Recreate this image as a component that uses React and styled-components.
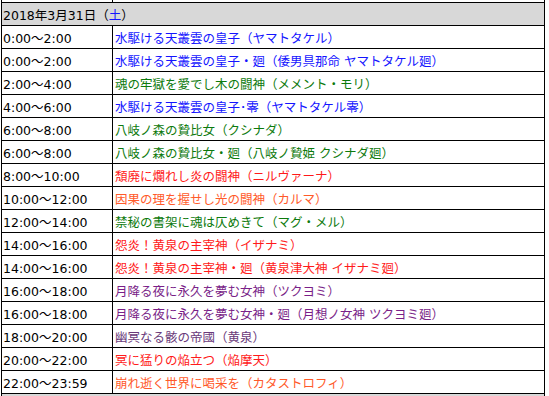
import React from 'react'
import styled, { createGlobalStyle } from "styled-components";

const GlobalStyle = createGlobalStyle`
    body{
        margin: 0;
        background: #fff;
        font-family: "DejaVu Sans", "Noto Sans CJK JP", sans-serif;
        font-size: 12.5px;
        color: #000;
    }
`;

const Page = styled.div`
    padding-left: 1px;
    height: 396px;
    overflow: hidden;
`;

const Table = styled.div`
    width: 544px;
    margin-top: -21px;
    border-left: 1px solid #000;
    border-right: 1px solid #000;
    box-sizing: border-box;
`;

const DayHeader = styled.div`
    height: 23px;
    box-sizing: border-box;
    border-top: 1px solid #000;
    background: #d8d8d8;
    display: flex;
    align-items: center;
    padding-left: 1px;
    white-space: nowrap;
`;

const Weekday = styled.span`
    color: ${props => props.color};
`;

const Row = styled.div`
    height: 23px;
    box-sizing: border-box;
    border-top: 1px solid #000;
    display: grid;
    grid-template-columns: 111px 1fr;
`;

const Time = styled.div`
    border-right: 1px solid #000;
    display: flex;
    align-items: center;
    padding-left: 1px;
    white-space: nowrap;
`;

const Title = styled.div`
    display: flex;
    align-items: center;
    padding-left: 2px;
    white-space: nowrap;
    color: ${props => props.color};
`;

const BLUE = "#1414ff";
const GREEN = "#0d7a0d";
const RED = "#ff1a1a";
const ORANGE = "#ff5a2a";
const PURPLE = "#7a1f88";

const quests = [
    ["0:00～2:00", "水駆ける天叢雲の皇子（ヤマトタケル）", BLUE],
    ["0:00～2:00", "水駆ける天叢雲の皇子・廻（倭男具那命 ヤマトタケル廻）", BLUE],
    ["2:00～4:00", "魂の牢獄を愛でし木の闘神（メメント・モリ）", GREEN],
    ["4:00～6:00", "水駆ける天叢雲の皇子･零（ヤマトタケル零）", BLUE],
    ["6:00～8:00", "八岐ノ森の贄比女（クシナダ）", GREEN],
    ["6:00～8:00", "八岐ノ森の贄比女・廻（八岐ノ贄姫 クシナダ廻）", GREEN],
    ["8:00～10:00", "頽廃に爛れし炎の闘神（ニルヴァーナ）", RED],
    ["10:00～12:00", "因果の理を握せし光の闘神（カルマ）", ORANGE],
    ["12:00～14:00", "禁秘の書架に魂は仄めきて（マグ・メル）", GREEN],
    ["14:00～16:00", "怨炎！黄泉の主宰神（イザナミ）", RED],
    ["14:00～16:00", "怨炎！黄泉の主宰神・廻（黄泉津大神 イザナミ廻）", RED],
    ["16:00～18:00", "月降る夜に永久を夢む女神（ツクヨミ）", PURPLE],
    ["16:00～18:00", "月降る夜に永久を夢む女神・廻（月想ノ女神 ツクヨミ廻）", PURPLE],
    ["18:00～20:00", "幽冥なる骸の帝國（黄泉）", "#6a3a7a"],
    ["20:00～22:00", "冥に猛りの焔立つ（焔摩天）", RED],
    ["22:00～23:59", "崩れ逝く世界に喝采を（カタストロフィ）", ORANGE],
];

const App = () => {
  return (
    <Page>
        <GlobalStyle />
        <Table>
            {/* tail of the previous day, scrolled out of view */}
            <Row>
                <Time />
                <Title />
            </Row>
            <DayHeader>
                2018年3月31日（<Weekday color={BLUE}>土</Weekday>）
            </DayHeader>
            {quests.map(([time, title, color], i) => (
                <Row key={i}>
                    <Time>{time}</Time>
                    <Title color={color}>{title}</Title>
                </Row>
            ))}
            {/* next day's header, only its top edge is visible */}
            <DayHeader />
        </Table>
    </Page>
  )
}

export default App;
